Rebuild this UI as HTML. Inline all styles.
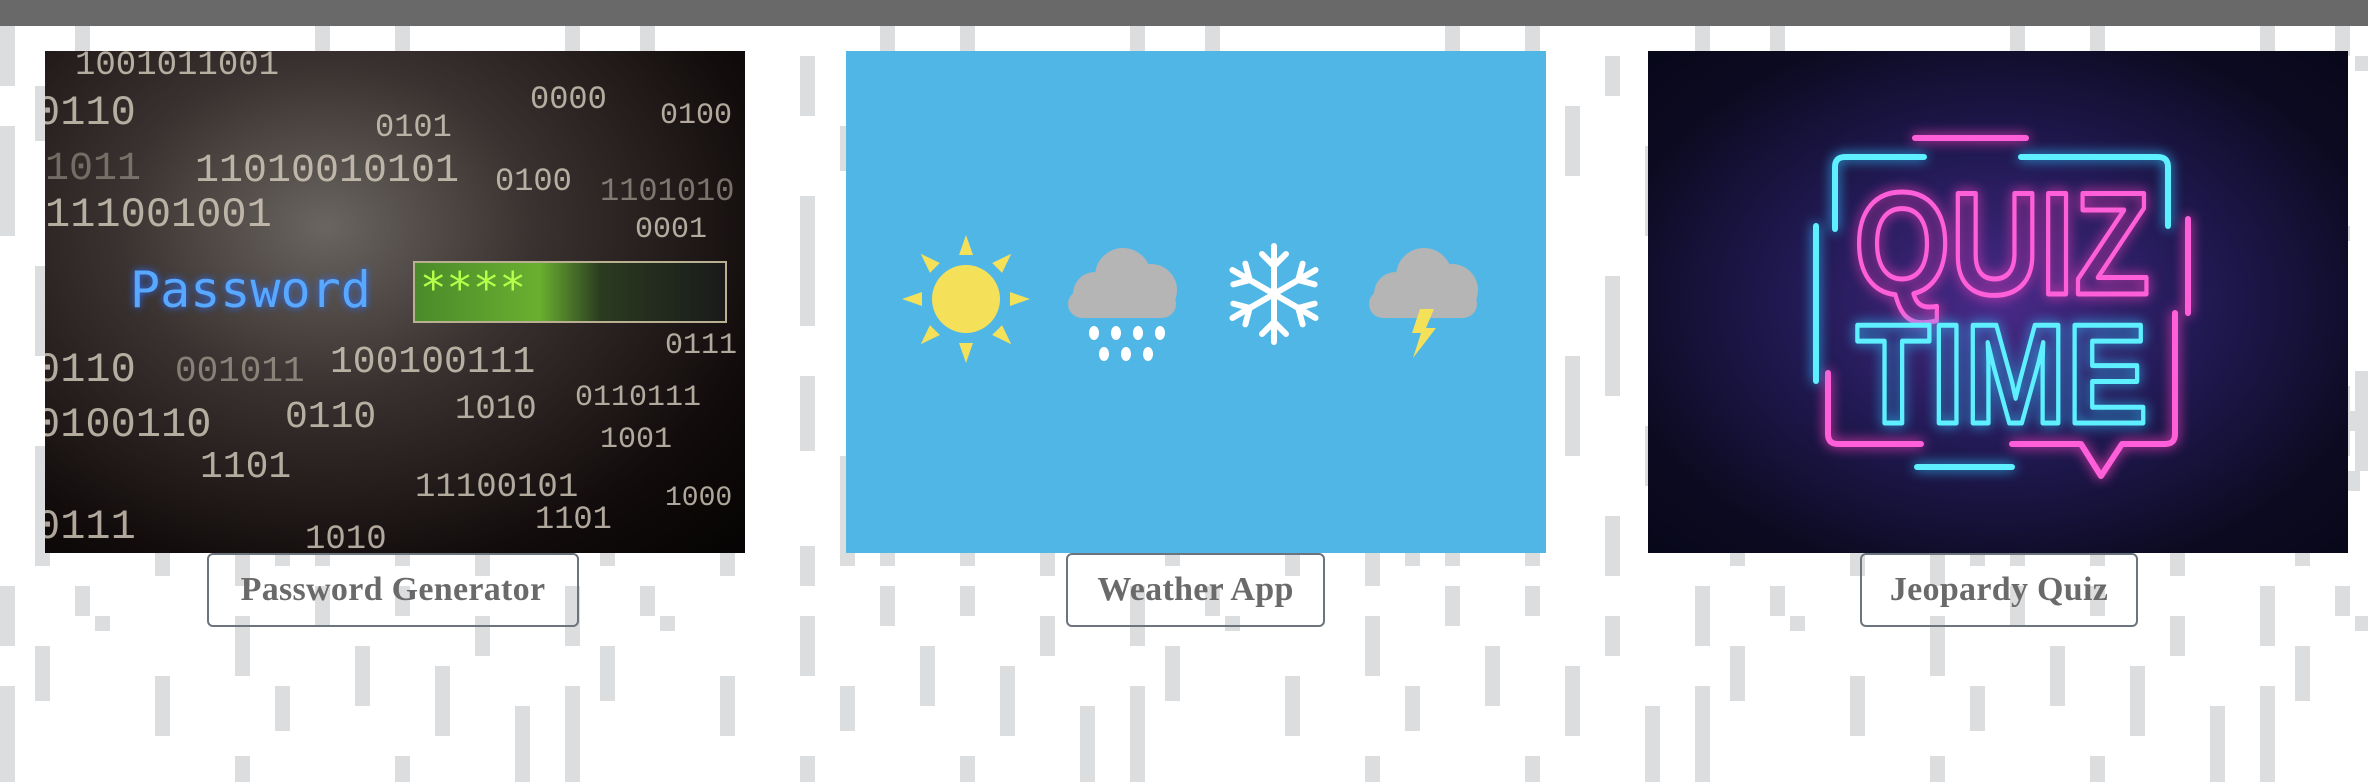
<!DOCTYPE html>
<html><head><meta charset="utf-8"><style>
html,body{margin:0;padding:0;width:2368px;height:782px;overflow:hidden;background:#fff;font-family:"Liberation Serif",serif}
.bar{position:absolute;left:0;top:0;width:2368px;height:26px;background:#696969}
.bg{position:absolute;left:0;top:26px;width:2368px;height:756px}
.card{position:absolute;top:51px;width:700px;height:502px;overflow:hidden}
.btn{position:absolute;top:553px;height:74px;border:2px solid #6c757d;border-radius:6px;color:#6a6a6a;font-size:34px;font-weight:bold;text-align:center;line-height:70px;box-sizing:border-box;font-family:"Liberation Serif",serif;letter-spacing:0.3px}
.pw{left:45px;background:radial-gradient(ellipse at 40% 35%,#6a6560 0%,#3a3230 35%,#120c0c 75%,#050303 100%)}
.bin{position:absolute;font-family:"Liberation Mono",monospace;color:#d8cfc0;opacity:.8;white-space:nowrap}
.wx{left:846px;background:#4fb6e5}
.qz{left:1648px;background:radial-gradient(ellipse at 50% 50%,#4a2a8a 0%,#221a55 40%,#0c0a20 80%,#08081a 100%)}
</style></head><body>
<div class="bar"></div>
<svg class="bg" width="2368" height="756">
<defs><pattern id="p" width="565" height="560" patternUnits="userSpaceOnUse">
<g fill="#dcdddf">
<rect x="0" y="0" width="15" height="60"/><rect x="0" y="100" width="15" height="110"/>
<rect x="35" y="60" width="15" height="55"/><rect x="35" y="240" width="15" height="90"/><rect x="35" y="420" width="15" height="120"/>
<rect x="75" y="0" width="15" height="30"/><rect x="95" y="30" width="15" height="15"/><rect x="75" y="200" width="15" height="15"/>
<rect x="75" y="360" width="15" height="70"/><rect x="55" y="385" width="60" height="20"/><rect x="95" y="345" width="15" height="100"/><rect x="115" y="375" width="15" height="15"/><rect x="85" y="445" width="15" height="20"/>
<rect x="155" y="90" width="15" height="60"/><rect x="155" y="470" width="15" height="80"/>
<rect x="235" y="30" width="15" height="60"/><rect x="235" y="170" width="15" height="130"/><rect x="235" y="350" width="15" height="75"/><rect x="235" y="520" width="15" height="40"/>
<rect x="275" y="100" width="15" height="45"/><rect x="275" y="430" width="15" height="110"/>
<rect x="315" y="0" width="15" height="40"/><rect x="315" y="200" width="15" height="110"/><rect x="315" y="470" width="15" height="70"/>
<rect x="355" y="60" width="15" height="60"/><rect x="355" y="360" width="15" height="15"/><rect x="355" y="400" width="15" height="60"/>
<rect x="395" y="0" width="15" height="30"/><rect x="395" y="170" width="15" height="180"/><rect x="395" y="450" width="15" height="90"/>
<rect x="435" y="80" width="15" height="70"/><rect x="435" y="330" width="15" height="100"/>
<rect x="475" y="30" width="15" height="40"/><rect x="475" y="250" width="15" height="120"/><rect x="475" y="490" width="15" height="60"/>
<rect x="515" y="120" width="15" height="90"/><rect x="515" y="400" width="15" height="60"/>
</g></pattern></defs>
<rect width="2368" height="756" fill="url(#p)"/>
</svg>

<div class="card pw">
<div class="bin" style="left:30px;top:-4px;font-size:34px">1001011001</div>
<div class="bin" style="left:-10px;top:38px;font-size:42px">0110</div>
<div class="bin" style="left:330px;top:58px;font-size:32px">0101</div>
<div class="bin" style="left:485px;top:30px;font-size:32px">0000</div>
<div class="bin" style="left:615px;top:48px;font-size:30px">0100</div>
<div class="bin" style="left:0px;top:96px;font-size:40px;opacity:.4">1011</div>
<div class="bin" style="left:150px;top:98px;font-size:40px">11010010101</div>
<div class="bin" style="left:450px;top:112px;font-size:32px">0100</div>
<div class="bin" style="left:555px;top:122px;font-size:32px;opacity:.5">1101010</div>
<div class="bin" style="left:0px;top:140px;font-size:42px">111001001</div>
<div class="bin" style="left:590px;top:162px;font-size:30px">0001</div>
<div style="position:absolute;left:85px;top:210px;font-family:'DejaVu Sans Mono',monospace;font-size:50px;color:#58a8ff;text-shadow:0 0 8px #2a70ff">Password</div>
<div style="position:absolute;left:368px;top:210px;width:310px;height:58px;border:2px solid #b8b090;background:linear-gradient(90deg,#4a8a2a,#6ab030 40%,#2a3a20 60%,#1a1a1a)"></div>
<div style="position:absolute;left:375px;top:212px;font-family:'DejaVu Sans Mono',monospace;font-size:44px;color:#b6ff4a">****</div>
<div class="bin" style="left:-10px;top:295px;font-size:42px">0110</div><div class="bin" style="left:130px;top:300px;font-size:36px;opacity:.5">001011</div><div class="bin" style="left:285px;top:290px;font-size:38px">100100111</div>
<div class="bin" style="left:620px;top:278px;font-size:30px">0111</div>
<div class="bin" style="left:-10px;top:350px;font-size:42px">0100110</div><div class="bin" style="left:240px;top:345px;font-size:38px">0110</div><div class="bin" style="left:410px;top:340px;font-size:34px">1010</div><div class="bin" style="left:530px;top:330px;font-size:30px">0110111</div>
<div class="bin" style="left:155px;top:395px;font-size:38px">1101</div><div class="bin" style="left:555px;top:372px;font-size:30px">1001</div>
<div class="bin" style="left:370px;top:418px;font-size:34px">11100101</div><div class="bin" style="left:620px;top:432px;font-size:28px">1000</div>
<div class="bin" style="left:-10px;top:452px;font-size:42px">0111</div><div class="bin" style="left:490px;top:450px;font-size:32px">1101</div><div class="bin" style="left:260px;top:470px;font-size:34px">1010</div>
</div>

<div class="card wx">
<svg width="700" height="502" viewBox="0 0 700 502">
<g fill="#f5e05a" transform="translate(120,248)">
<circle r="34"/>
<g id="r"><polygon points="-7,-44 7,-44 0,-64"/></g>
<use href="#r" transform="rotate(45)"/><use href="#r" transform="rotate(90)"/><use href="#r" transform="rotate(135)"/><use href="#r" transform="rotate(180)"/><use href="#r" transform="rotate(225)"/><use href="#r" transform="rotate(270)"/><use href="#r" transform="rotate(315)"/>
</g>
<g fill="#b5b5b5" transform="translate(277,225)">
<circle cx="0" cy="0" r="28"/><circle cx="-28" cy="18" r="22"/><circle cx="28" cy="14" r="26"/><rect x="-55" y="14" width="108" height="28" rx="14"/>
</g>
<g fill="#fff">
<ellipse cx="248" cy="282" rx="5" ry="7"/><ellipse cx="270" cy="282" rx="5" ry="7"/><ellipse cx="292" cy="282" rx="5" ry="7"/><ellipse cx="314" cy="282" rx="5" ry="7"/>
<ellipse cx="258" cy="303" rx="5" ry="7"/><ellipse cx="280" cy="303" rx="5" ry="7"/><ellipse cx="302" cy="303" rx="5" ry="7"/>
</g>
<g stroke="#fff" stroke-width="6" fill="none" stroke-linecap="round" transform="translate(428,243)">
<g id="a"><line x1="0" y1="0" x2="0" y2="-48"/><polyline points="-12,-40 0,-28 12,-40"/></g>
<use href="#a" transform="rotate(60)"/><use href="#a" transform="rotate(120)"/><use href="#a" transform="rotate(180)"/><use href="#a" transform="rotate(240)"/><use href="#a" transform="rotate(300)"/>
</g>
<g fill="#b5b5b5" transform="translate(578,225)">
<circle cx="0" cy="0" r="28"/><circle cx="-28" cy="18" r="22"/><circle cx="28" cy="14" r="26"/><rect x="-55" y="14" width="108" height="28" rx="14"/>
</g>
<polygon fill="#f5e05a" points="574,258 588,258 580,277 590,277 567,307 575,282 566,282"/>
</svg>
</div>

<div class="card qz">
<svg width="700" height="502" viewBox="0 0 700 502" fill="none" stroke-linecap="round" stroke-linejoin="round">
<g stroke="#ff5fd8" stroke-width="6" style="filter:drop-shadow(0 0 6px #ff40c0)">
<line x1="267" y1="87" x2="378" y2="87"/>
<path d="M180 322 V383 Q180 393 190 393 H273"/>
<path d="M364 393 H433 L453 425 L474 393 H517 Q527 393 527 383 V262"/>
<path d="M540 168 V262"/>
<text x="354" y="243" text-anchor="middle" textLength="296" lengthAdjust="spacingAndGlyphs" font-family="Liberation Sans,sans-serif" font-size="146" font-weight="bold" stroke-width="5">QUIZ</text>
</g>
<g stroke="#5ef0ff" stroke-width="6" style="filter:drop-shadow(0 0 6px #30c0ff)">
<path d="M276 106 H197 Q187 106 187 116 V178"/>
<path d="M168 175 V330"/>
<path d="M373 106 H510 Q520 106 520 116 V175"/>
<line x1="269" y1="416" x2="364" y2="416"/>
<text x="354" y="372" text-anchor="middle" textLength="292" lengthAdjust="spacingAndGlyphs" font-family="Liberation Sans,sans-serif" font-size="142" font-weight="bold" stroke-width="5">TIME</text>
</g>
</svg>
</div>

<div class="btn" style="left:207px;width:372px">Password Generator</div>
<div class="btn" style="left:1066px;width:259px">Weather App</div>
<div class="btn" style="left:1860px;width:278px">Jeopardy Quiz</div>
</body></html>
